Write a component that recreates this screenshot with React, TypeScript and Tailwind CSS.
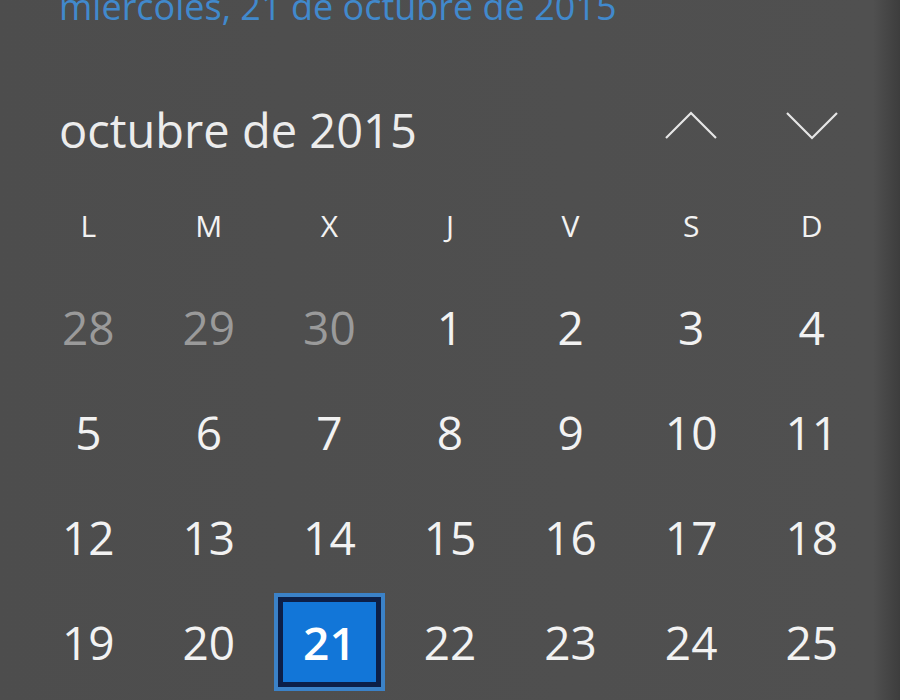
// Kalender-Flyout (Windows 10 Stil), Monatsansicht Oktober 2015

const FONT = "font-['Open_Sans','Noto_Sans',sans-serif]"

const WEEKDAYS = ['L', 'M', 'X', 'J', 'V', 'S', 'D']

// Wochen: [Tag, gehört zum aktuellen Monat?]
const WEEKS: [number, boolean][][] = [
  [[28, false], [29, false], [30, false], [1, true], [2, true], [3, true], [4, true]],
  [[5, true], [6, true], [7, true], [8, true], [9, true], [10, true], [11, true]],
  [[12, true], [13, true], [14, true], [15, true], [16, true], [17, true], [18, true]],
  [[19, true], [20, true], [21, true], [22, true], [23, true], [24, true], [25, true]],
]

const TODAY = 21

function Chevron({ up }: { up?: boolean }) {
  return (
    <svg width="52" height="30" viewBox="0 0 52 30" fill="none">
      <path
        d={up ? 'M1 28 L26 3 L51 28' : 'M1 2 L26 27 L51 2'}
        stroke="#e6e6e6"
        strokeWidth="2.2"
      />
    </svg>
  )
}

function DayCell({ day, inMonth }: { day: number; inMonth: boolean }) {
  if (day === TODAY && inMonth) {
    return (
      <div className="flex h-[105px] items-center justify-center">
        <div className="flex h-[98px] w-[111px] items-center justify-center border-4 border-[#3b82c8] bg-[#0c1f48] p-[5px]">
          <div className="flex h-full w-full items-center justify-center bg-[#1276d8]">
            <span className="text-[46px] leading-none font-semibold text-white">{day}</span>
          </div>
        </div>
      </div>
    )
  }
  return (
    <div className="flex h-[105px] items-center justify-center">
      <span
        className={`text-[46px] leading-none ${inMonth ? 'text-[#f2f2f2]' : 'text-[#9a9a9a]'}`}
      >
        {day}
      </span>
    </div>
  )
}

export default function App() {
  return (
    <div
      className={`${FONT} relative h-[700px] w-[900px] overflow-hidden bg-gradient-to-r from-[#4d4d4d] via-[#505050] via-[97%] to-[#3d3d3d]`}
    >
      {/* Datumszeile oben (abgeschnitten) */}
      <div className="mt-[-13px] flex h-[40px] items-center pl-[59px]">
        <span className="text-[36px] leading-none text-[#4189cc]">
          miércoles, 21 de octubre de 2015
        </span>
      </div>

      {/* Monat + Pfeile */}
      <div className="mt-[63px] grid h-[80px] grid-cols-7 px-[28px]">
        <div className="col-span-5 flex items-center pl-[31px]">
          <span className="text-[47px] leading-none text-[#ececec]">octubre de 2015</span>
        </div>
        <div className="flex items-center justify-center pb-[10px]">
          <Chevron up />
        </div>
        <div className="flex items-center justify-center pb-[8px]">
          <Chevron />
        </div>
      </div>

      {/* Wochentage */}
      <div className="mt-[31px] grid h-[50px] grid-cols-7 px-[28px]">
        {WEEKDAYS.map((d) => (
          <div key={d} className="flex items-center justify-center">
            <span className="text-[30px] leading-none text-[#f2f2f2]">{d}</span>
          </div>
        ))}
      </div>

      {/* Tage */}
      <div className="mt-[23px] px-[28px]">
        {WEEKS.map((week, i) => (
          <div key={i} className="grid grid-cols-7">
            {week.map(([day, inMonth]) => (
              <DayCell key={`${i}-${day}`} day={day} inMonth={inMonth} />
            ))}
          </div>
        ))}
      </div>
    </div>
  )
}
